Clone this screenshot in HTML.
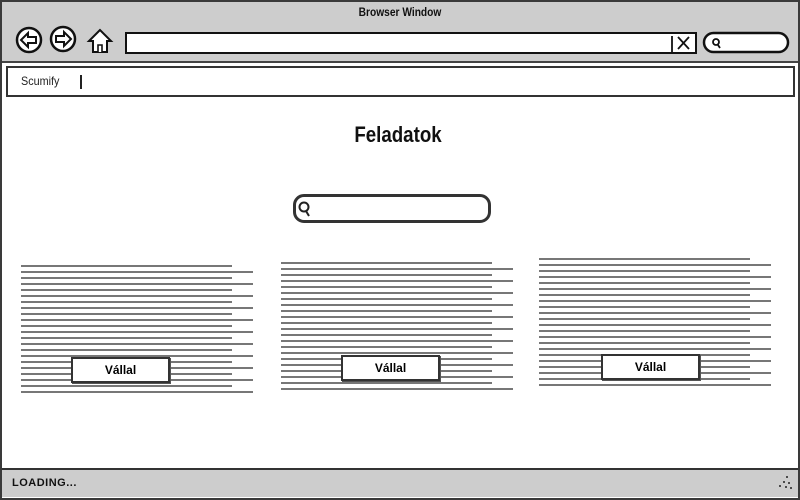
<!DOCTYPE html><html><head><style>
body{margin:0;width:800px;height:500px;overflow:hidden;background:#fff;font-family:"Liberation Sans",sans-serif;position:relative}
div{position:absolute;box-sizing:border-box}
.s{background:repeating-linear-gradient(to bottom,#777 0px,#777 2px,transparent 2px,transparent 12px);height:132px}
.btn{border:2px solid #333;background:#fff;width:99px;height:26px;font-weight:bold;font-size:12px;text-align:center;line-height:22px;box-shadow:1px 1px 0 #555}
</style></head><body>
<div style="left:0;top:0;width:800px;height:500px;border:2px solid #3a3a3a;background:#fff"></div>
<div style="left:2px;top:2px;width:796px;height:61px;background:#cdcdcd;border-bottom:2px solid #444"></div>
<div style="left:0;top:5px;width:800px;text-align:center;font-size:12px;font-weight:bold;color:#111;transform:scaleX(.85)">Browser Window</div>
<svg style="position:absolute;left:0;top:0" width="800" height="70">
<g fill="#fff" stroke="#111" stroke-width="2.5">
<circle cx="29" cy="40" r="12"/><circle cx="63" cy="39" r="12"/>
<path d="M21 40 L28 33 V37 H36 V43 H28 V47Z" stroke-width="2"/>
<path d="M71 39 L64 32 V36 H56 V42 H64 V46Z" stroke-width="2"/>
<path d="M100 30 L89 41 H93 V52 H107 V41 H111Z" stroke-width="2"/>
<path d="M98 52 V45 H102 V52" stroke-width="1.6"/>
<rect x="126" y="33" width="570" height="20" stroke-width="2"/>
<rect x="704" y="33" width="84" height="19" rx="9.5"/>
</g>
<path d="M672 36 V52 M678 37 L689 49 M689 37 L678 49" stroke="#111" stroke-width="1.8"/>
<circle cx="716" cy="42" r="3" fill="none" stroke="#111" stroke-width="1.8"/><path d="M718 45 L720 48" stroke="#111" stroke-width="1.8"/>
</svg>
<div style="left:6px;top:66px;width:789px;height:31px;border:2px solid #333;background:#fff"></div>
<div style="left:21px;top:74px;font-size:12px;color:#222;transform:scaleX(.9);transform-origin:left">Scumify</div>
<div style="left:80px;top:75px;width:1.5px;height:14px;background:#222"></div>
<div style="left:0;top:122px;width:796px;text-align:center;font-size:22px;font-weight:bold;color:#111;transform:scaleX(.85)">Feladatok</div>
<div style="left:293px;top:194px;width:198px;height:29px;border:3px solid #333;border-radius:11px"></div>
<svg style="position:absolute;left:295px;top:198px" width="20" height="22"><circle cx="9" cy="9" r="4.5" fill="none" stroke="#222" stroke-width="2"/><path d="M11 13 L14 18" stroke="#222" stroke-width="2"/></svg>
<div class="s" style="left:21px;top:265px;width:211px"></div>
<div class="s" style="left:21px;top:271px;width:232px"></div>
<div class="s" style="left:281px;top:262px;width:211px"></div>
<div class="s" style="left:281px;top:268px;width:232px"></div>
<div class="s" style="left:539px;top:258px;width:211px"></div>
<div class="s" style="left:539px;top:264px;width:232px"></div>
<div class="btn" style="left:71px;top:357px">Vállal</div>
<div class="btn" style="left:341px;top:355px">Vállal</div>
<div class="btn" style="left:601px;top:354px">Vállal</div>
<div style="left:2px;top:468px;width:796px;height:29px;background:#cdcdcd;border-top:2px solid #333"></div>
<div style="left:12px;top:477px;font-size:11px;font-weight:bold;color:#111;letter-spacing:.5px">LOADING...</div>
<svg style="position:absolute;left:776px;top:474px" width="18" height="18"><g fill="#222"><circle cx="11" cy="3" r="1"/><circle cx="8" cy="8" r="1"/><circle cx="13" cy="9" r="1"/><circle cx="4" cy="12" r="1"/><circle cx="10" cy="13" r="1"/><circle cx="15" cy="14" r="1"/></g></svg>
</body></html>
